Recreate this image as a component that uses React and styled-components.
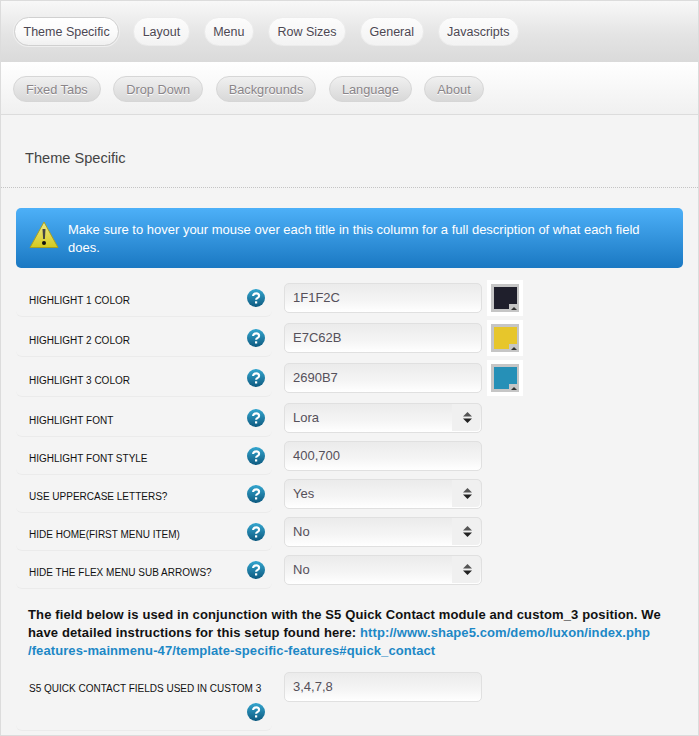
import React from "react";
import styled, { createGlobalStyle } from "styled-components";

const Global = createGlobalStyle`
  html, body { margin: 0; padding: 0; background: #f4f4f4; }
  body { font-family: "Liberation Sans", Arial, sans-serif; }
`;

const Page = styled.div`
  width: 699px;
  height: 736px;
  box-sizing: border-box;
  overflow: hidden;
  border: 1px solid #dcdcdc;
  background: #f4f4f4;
`;

const TabBar = styled.div`
  height: 61px;
  box-sizing: border-box;
  padding: 16px 0 0 13px;
  display: flex;
  gap: 14px;
  align-items: flex-start;
  background: linear-gradient(#f8f8f8 0%, #e4e4e4 55%, #dadada 100%);
`;

const Tab = styled.div`
  height: 29px;
  box-sizing: border-box;
  padding: 0 8.5px;
  border-radius: 15px;
  border: 1px solid ${(p) => (p.$active ? "#d0d0d0" : "#ececec")};
  box-shadow: ${(p) => (p.$active ? "0 0 0 1px #efefef" : "none")};
  background: ${(p) =>
    p.$active
      ? "linear-gradient(#fff, #fafafa 60%, #f0f0f0)"
      : "linear-gradient(#fcfcfc, #f3f3f3)"};
  font-size: 12.5px;
  line-height: 28px;
  color: #4c4752;
  text-shadow: 0 1px 0 #fff;
  white-space: nowrap;
`;

const SubBar = styled.div`
  height: 53px;
  box-sizing: border-box;
  padding: 14px 0 0 12px;
  display: flex;
  gap: 12.5px;
  align-items: flex-start;
  background: linear-gradient(#ffffff, #f0f0f0);
  border-bottom: 1px solid #dcdcdc;
`;

const SubTab = styled.div`
  height: 26px;
  box-sizing: border-box;
  padding: 0 12px;
  border-radius: 13px;
  border: 1px solid #d6d6d6;
  background: linear-gradient(#f0f0f0, #d8d8d8);
  font-size: 12.8px;
  line-height: 25px;
  color: #8a8589;
  text-shadow: 0 1px 0 #fff;
  white-space: nowrap;
`;

const Heading = styled.div`
  height: 73px;
  box-sizing: border-box;
  padding: 34px 0 0 24px;
  font-size: 14.6px;
  line-height: 18px;
  color: #444;
  border-bottom: 1px dotted #c4c4c4;
`;

const Body = styled.div`
  padding: 20px 15px 0;
`;

const Alert = styled.div`
  height: 60px;
  box-sizing: border-box;
  padding: 13px 20px 0 52px;
  position: relative;
  border-radius: 5px;
  background: linear-gradient(#4db0f8, #1a78c2);
  font-size: 13px;
  line-height: 18px;
  color: #fff;
`;

const AlertIcon = styled.svg`
  position: absolute;
  left: 13px;
  top: 13px;
`;

const Rows = styled.div`
  margin-top: 12px;
`;

const Row = styled.div`
  display: grid;
  grid-template-columns: 256px 198px 36px;
  column-gap: 12px;
  align-items: start;
  height: ${(p) => p.$h}px;
`;

const LabelCell = styled.div`
  height: 37px;
  border-bottom: 1px solid #ebebeb;
  border-radius: 0 0 6px 6px;
  display: flex;
  align-items: center;
  justify-content: space-between;
  box-sizing: border-box;
  padding: 5px 7px 0 13px;
  font-size: 10px;
  color: #111;
  text-transform: uppercase;
`;

const Help = styled.svg`
  flex: none;
  margin-top: ${(p) => (p.$flat ? 0 : -6)}px;
`;

const Field = styled.div`
  height: 30px;
  box-sizing: border-box;
  border: 1px solid #e0e0e0;
  border-radius: 5px;
  background: linear-gradient(#ebebeb, #f5f5f5 60%, #ffffff);
  padding-left: 8px;
  font-size: 13px;
  line-height: 27px;
  color: #55505a;
  position: relative;
  margin-top: 3px;
`;

const Spinner = styled.div`
  position: absolute;
  right: 1px;
  top: 0;
  bottom: 1px;
  width: 28px;
  box-sizing: border-box;
  padding-left: 3px;
  background: #f0f0f0;
  border-radius: 0 4px 4px 0;
  display: flex;
  align-items: center;
  justify-content: center;
`;

const Swatch = styled.div`
  width: 36px;
  height: 36px;
  margin-left: -7px;
  background: #fff;
  box-sizing: border-box;
  padding: 4px;
`;

const SwatchInner = styled.div`
  width: 28px;
  height: 28px;
  background: #c6c6c6;
  box-sizing: border-box;
  padding: 3px 2px 3px 3px;
  position: relative;
`;

const SwatchColor = styled.div`
  width: 23px;
  height: 22px;
  background: ${(p) => p.$color};
`;

const SwatchCorner = styled.div`
  position: absolute;
  right: 0;
  bottom: 0;
  width: 10px;
  height: 8px;
  background: #c6c6c6;
  &::after {
    content: "";
    position: absolute;
    right: 2px;
    bottom: 2px;
    border: 3px solid transparent;
    border-top: 0;
    border-bottom: 3px solid #333;
  }
`;

const Note = styled.p`
  margin: 16px 0 0 12px;
  width: 650px;
  font-size: 13px;
  line-height: 18px;
  letter-spacing: 0.13px;
  font-weight: bold;
  color: #111;
`;

const NoteLink = styled.a`
  color: #1d88c6;
  letter-spacing: 0.09px;
  text-decoration: none;
`;

const LastRow = styled(Row)`
  margin-top: 12px;
`;

const LastLabel = styled.div`
  height: 59px;
  box-sizing: border-box;
  padding: 9px 7px 0 13px;
  border-bottom: 1px solid #ebebeb;
  border-radius: 0 0 6px 6px;
  font-size: 10px;
  line-height: 16px;
  color: #111;
  text-transform: uppercase;
  white-space: nowrap;
`;

const LastHelp = styled.div`
  display: flex;
  justify-content: flex-end;
  margin-top: 6px;
`;

const LastField = styled(Field)`
  margin-top: 0;
`;

const tabs = ["Theme Specific", "Layout", "Menu", "Row Sizes", "General", "Javascripts"];
const subTabs = ["Fixed Tabs", "Drop Down", "Backgrounds", "Language", "About"];

const rows = [
  { label: "Highlight 1 Color", value: "1F1F2C", color: "#1f1f2c", h: 40 },
  { label: "Highlight 2 Color", value: "E7C62B", color: "#e7c62b", h: 40 },
  { label: "Highlight 3 Color", value: "2690B7", color: "#2690b7", h: 40 },
  { label: "Highlight Font", value: "Lora", select: true, h: 38 },
  { label: "Highlight Font Style", value: "400,700", h: 38 },
  { label: "Use Uppercase Letters?", value: "Yes", select: true, h: 38 },
  { label: "Hide Home(First Menu Item)", value: "No", select: true, h: 38 },
  { label: "Hide the Flex Menu Sub Arrows?", value: "No", select: true, h: 38 },
];

const HelpIcon = ({ flat }) => (
  <Help $flat={flat} width="18" height="18" viewBox="0 0 18 18">
    <defs>
      <linearGradient id="helpFill" x1="0" y1="0" x2="0" y2="1">
        <stop offset="0" stopColor="#34a6cf" />
        <stop offset="1" stopColor="#0e5a80" />
      </linearGradient>
    </defs>
    <circle cx="9" cy="9" r="9" fill="url(#helpFill)" />
    <path
      d="M6.100 7c0-1.700 1.300-2.600 3-2.600s3 1 3 2.500c0 1.900-3 2-3 3.900"
      fill="none"
      stroke="#fff"
      strokeWidth="2.100"
    />
    <rect x="8" y="12.300" width="2.200" height="2.200" fill="#fff" />
  </Help>
);

const SpinnerIcon = () => (
  <svg width="9" height="11" viewBox="0 0 9 11">
    <path d="M4.500 0L9 4.500H0z" fill="#555" />
    <path d="M0 6.500h9L4.500 11z" fill="#222" />
  </svg>
);

const App = () => {
  return (
    <Page>
      <Global />
      <TabBar>
        {tabs.map((t, i) => (
          <Tab key={t} $active={i === 0}>{t}</Tab>
        ))}
      </TabBar>
      <SubBar>
        {subTabs.map((t) => (
          <SubTab key={t}>{t}</SubTab>
        ))}
      </SubBar>
      <Heading>Theme Specific</Heading>
      <Body>
        <Alert>
          <AlertIcon width="30" height="28" viewBox="0 0 30 28">
            <defs>
              <linearGradient id="warnFill" x1="0" y1="0" x2="0" y2="1">
                <stop offset="0" stopColor="#efe98a" />
                <stop offset="1" stopColor="#d4ca1e" />
              </linearGradient>
            </defs>
            <path d="M15 1L29 26.500H1z" fill="url(#warnFill)" stroke="#a8a020" strokeWidth="1" />
            <path d="M13.500 8h3l-.6 10h-1.800z" fill="#444" />
            <circle cx="15" cy="22" r="2" fill="#111" />
          </AlertIcon>
          Make sure to hover your mouse over each title in this column for a full description of what each field does.
        </Alert>
        <Rows>
          {rows.map((r) => (
            <Row key={r.label} $h={r.h}>
              <LabelCell>
                {r.label}
                <HelpIcon />
              </LabelCell>
              <Field>
                {r.value}
                {r.select && (
                  <Spinner>
                    <SpinnerIcon />
                  </Spinner>
                )}
              </Field>
              {r.color && (
                <Swatch>
                  <SwatchInner>
                    <SwatchColor $color={r.color} />
                    <SwatchCorner />
                  </SwatchInner>
                </Swatch>
              )}
            </Row>
          ))}
        </Rows>
        <Note>
          The field below is used in conjunction with the S5 Quick Contact module and custom_3 position. We have detailed instructions for this setup found here:{" "}
          <NoteLink href="#">
            http://www.shape5.com/demo/luxon/index.php
            <br />
            /features-mainmenu-47/template-specific-features#quick_contact
          </NoteLink>
        </Note>
        <LastRow $h={60}>
          <LastLabel>
            S5 Quick Contact Fields Used in Custom 3
            <LastHelp>
              <HelpIcon flat />
            </LastHelp>
          </LastLabel>
          <LastField>3,4,7,8</LastField>
        </LastRow>
      </Body>
    </Page>
  );
};

export default App;
